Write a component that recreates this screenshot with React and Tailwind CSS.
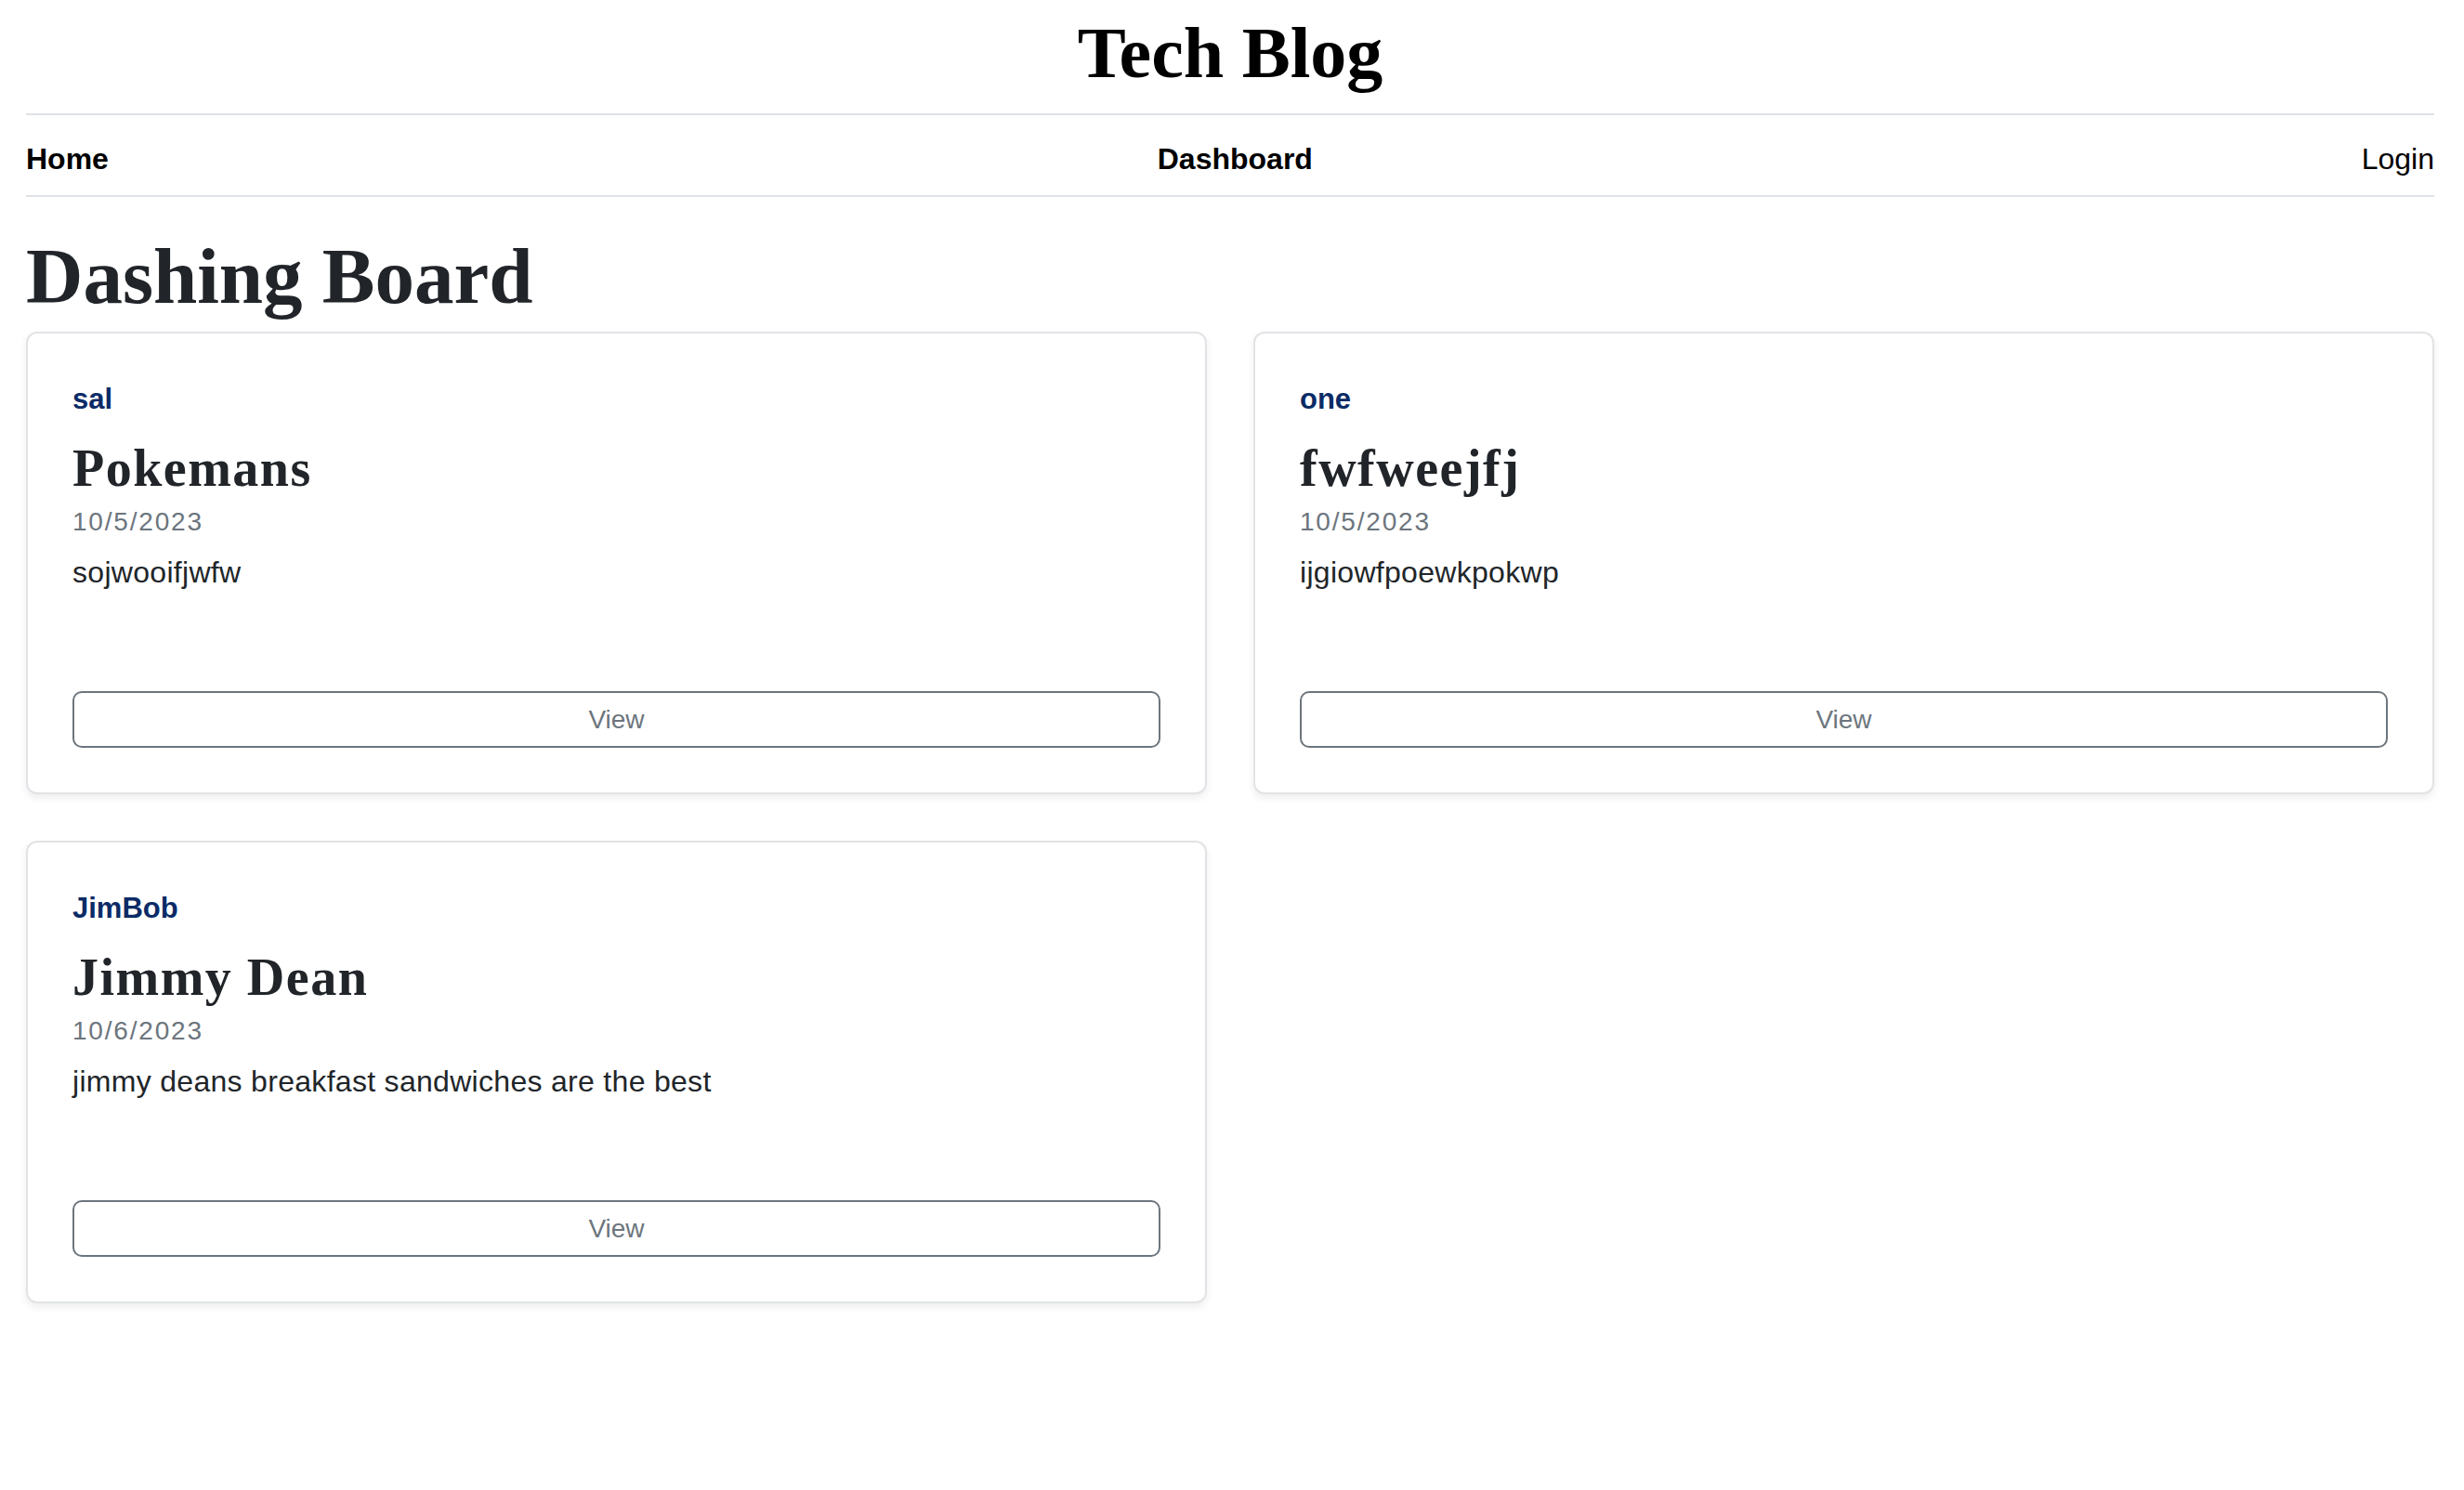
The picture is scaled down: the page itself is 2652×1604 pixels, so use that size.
import React from "react";

const posts = [
  { author: "sal", title: "Pokemans", date: "10/5/2023", body: "sojwooifjwfw" },
  { author: "one", title: "fwfweejfj", date: "10/5/2023", body: "ijgiowfpoewkpokwp" },
  { author: "JimBob", title: "Jimmy Dean", date: "10/6/2023", body: "jimmy deans breakfast sandwiches are the best" },
];

function Card({ post }) {
  return (
    <div className="flex flex-col rounded-[12px] border-2 border-[#e1e3e6] bg-white p-[48px] shadow-[0_4px_8px_rgba(0,0,0,0.075)]">
      <div className="text-[31px] leading-[45px] font-bold text-[#0b2b66]">{post.author}</div>
      <div className="mt-[20px] font-['Liberation_Serif',serif] text-[56px] leading-[64px] font-bold tracking-[1.5px] text-[#212529]">
        {post.title}
      </div>
      <div className="mt-[8px] text-[28px] leading-[36px] tracking-[1.8px] text-[#6c757d]">{post.date}</div>
      <div className="mt-[12px] text-[32px] leading-[48px] tracking-[0.3px] text-[#212529]">{post.body}</div>
      <button className="mt-[104px] flex h-[61px] w-full items-center justify-center rounded-[10px] border-2 border-[#6c757d] bg-white text-[28px] text-[#6c757d]">
        View
      </button>
    </div>
  );
}

export default function App() {
  return (
    <div className="min-h-screen bg-white font-['Liberation_Sans',Arial,sans-serif] text-[#212529]">
      <div className="pl-[28px] pr-[32px]">
        <header>
          <h1 className="pt-[10px] text-center font-['Liberation_Serif',serif] text-[78px] leading-[94px] font-bold text-black">
            Tech Blog
          </h1>
          <nav className="mt-[18px] flex items-start justify-between border-y-2 border-[#dee2e6] pt-[23px] pb-[15px] text-[32px] leading-[48px] text-black">
            <a className="font-bold">Home</a>
            <a className="font-bold">Dashboard</a>
            <a>Login</a>
          </nav>
        </header>
        <main>
          <h2 className="mt-[35px] font-['Liberation_Serif',serif] text-[85px] leading-[100px] font-bold text-[#212529]">
            Dashing Board
          </h2>
          <div className="mt-[10px] grid grid-cols-2 gap-[50px]">
            {posts.map((p) => (
              <Card key={p.title} post={p} />
            ))}
          </div>
        </main>
      </div>
    </div>
  );
}
